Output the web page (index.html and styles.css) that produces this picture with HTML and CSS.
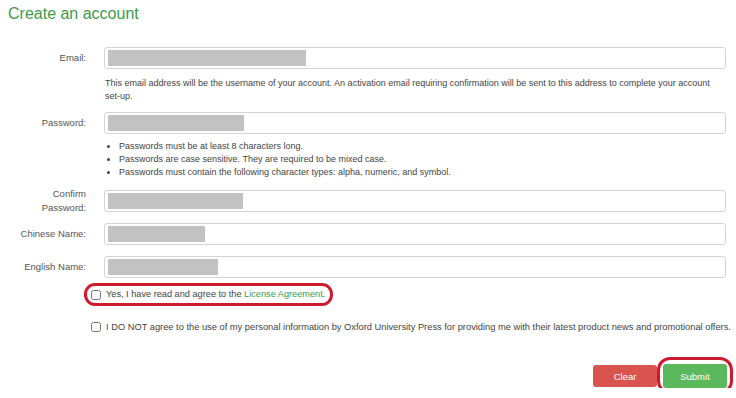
FILE: index.html
```html
<!DOCTYPE html>
<html lang="en">
<head>
<meta charset="utf-8">
<title>Create an account</title>
<link rel="stylesheet" href="styles.css">
</head>
<body>
<div class="page">
  <h1 class="title">Create an account</h1>
  <form class="form">
    <div class="row">
      <label class="label">Email:</label>
      <div class="input"><span class="mask" style="width:198px"></span></div>
    </div>
    <p class="help">This email address will be the username of your account. An activation email requiring confirmation will be sent to this address to complete your account set-up.</p>
    <div class="row">
      <label class="label">Password:</label>
      <div class="input"><span class="mask" style="width:136px"></span></div>
    </div>
    <ul class="rules">
      <li>Passwords must be at least 8 characters long.</li>
      <li>Passwords are case sensitive. They are required to be mixed case.</li>
      <li>Passwords must contain the following character types: alpha, numeric, and symbol.</li>
    </ul>
    <div class="row row-tall">
      <label class="label">Confirm<br>Password:</label>
      <div class="input"><span class="mask" style="width:135px"></span></div>
    </div>
    <div class="row row-cn">
      <label class="label">Chinese Name:</label>
      <div class="input"><span class="mask" style="width:97px"></span></div>
    </div>
    <div class="row row-en">
      <label class="label">English Name:</label>
      <div class="input"><span class="mask" style="width:110px"></span></div>
    </div>
    <div class="check check-agree">
      <label class="check-label ring"><input type="checkbox" class="box"><span>Yes, I have read and agree to the <a class="link" href="#">License Agreement</a>.</span></label>
    </div>
    <div class="check check-optout">
      <label class="check-label"><input type="checkbox" class="box"><span>I DO NOT agree to the use of my personal information by Oxford University Press for providing me with their latest product news and promotional offers.</span></label>
    </div>
    <div class="actions">
      <button type="button" class="btn btn-clear">Clear</button>
      <button type="button" class="btn btn-submit ring-btn">Submit</button>
    </div>
  </form>
</div>
</body>
</html>
```

FILE: styles.css
```css
* { box-sizing: border-box; }
html, body { margin: 0; padding: 0; background: #ffffff; }
body {
  font-family: "Liberation Sans", Arial, sans-serif;
  color: #444444;
}
.page {
  padding: 5px 10px 0 8px;
}
.title {
  margin: 0;
  font-size: 16px;
  line-height: 18px;
  font-weight: normal;
  color: #3d9a4b;
}
.form {
  margin-top: 24px;
}
.row {
  display: grid;
  grid-template-columns: 78px 622px;
  column-gap: 18px;
  align-items: center;
}
.label {
  text-align: right;
  font-size: 9.5px;
  line-height: 14px;
  color: #555555;
}
.input {
  height: 22px;
  border: 1px solid #d4d4d4;
  border-radius: 3px;
  padding: 2px 3px;
  background: #ffffff;
}
.mask {
  display: block;
  height: 16px;
  background: #c2c2c2;
}
.help {
  margin: 8px 0 9px 97px;
  font-size: 9px;
  line-height: 13px;
  color: #444444;
}
.rules {
  margin: 6px 0 0 97px;
  padding-left: 14px;
  font-size: 9px;
  line-height: 13px;
  color: #444444;
}
.row-tall { margin-top: 8px; height: 28px; }
.row-cn { margin-top: 8px; }
.row-en { margin-top: 11px; }
.check {
  margin-left: 83px;
  font-size: 9.3px;
  line-height: 13px;
  color: #444444;
  white-space: nowrap;
}
.check-agree { margin-top: 10px; font-size: 9.2px; }
.check-optout { margin-top: 17px; }
.check-label {
  display: inline-flex;
  align-items: center;
  gap: 5px;
}
.box {
  width: 10px;
  height: 10px;
  margin: 0;
  flex: none;
}
.link {
  color: #3d9a4b;
  text-decoration: none;
}
.ring { position: relative; }
.ring::after {
  content: "";
  position: absolute;
  left: -7px;
  right: -8px;
  top: -5px;
  bottom: -5px;
  border: 3px solid #cc1b2f;
  border-radius: 11px;
  pointer-events: none;
}
.actions {
  margin-top: 28px;
  margin-right: -1px;
  display: flex;
  justify-content: flex-end;
  gap: 6px;
}
.btn {
  width: 64px;
  height: 24px;
  border: none;
  border-radius: 3px;
  font-family: "Liberation Sans", Arial, sans-serif;
  font-size: 9.5px;
  color: #ffffff;
  padding: 0;
}
.btn-clear { background: #d9534f; margin-top: 1px; height: 22px; }
.btn-submit { background: #5cb85c; }
.ring-btn { position: relative; }
.ring-btn::after {
  content: "";
  position: absolute;
  left: -6px;
  right: -6px;
  top: -7px;
  bottom: -6px;
  border: 3px solid #cc1b2f;
  border-radius: 13px;
  pointer-events: none;
}
```
